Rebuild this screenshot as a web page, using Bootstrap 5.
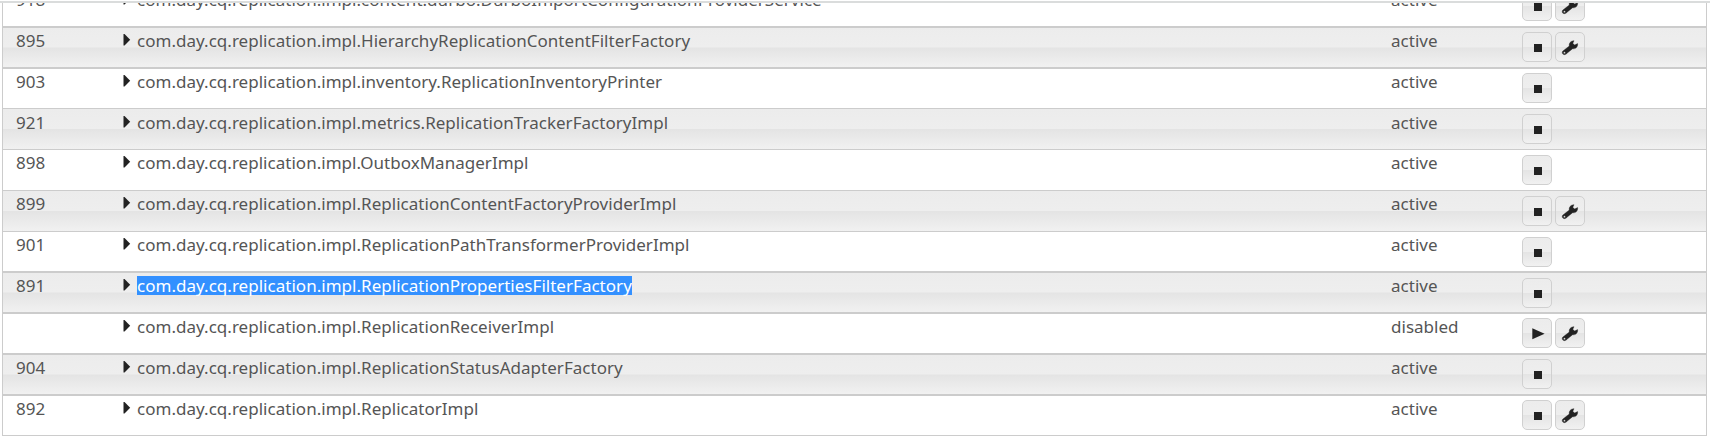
<!DOCTYPE html>
<html lang="en"><head><meta charset="utf-8"><title>Components</title>
<link href="https://cdn.jsdelivr.net/npm/bootstrap@5.3.0/dist/css/bootstrap.min.css" rel="stylesheet">
<style>
body{background:#fff;color:#555;font:17px/20px "Noto Sans",sans-serif;letter-spacing:.025px;overflow:hidden;height:436px}
.topline{height:2px;background:#dadcdc;margin-top:1px}
.comps{margin:0 3px 0 2px;height:433px;border:1px solid #ccc;border-top:0}
.comp{height:41px;border-top:2px solid #ccc;padding-left:13px}
.comp.thin{border-top-width:1px}
.comp.thin>.acts{padding-top:5px}
.comp.thin.low>*:not(.acts){margin-top:1px}
.comp.short{height:40px}
.comp.drop>.acts{padding-top:5px}
.comp.odd,.act{background:linear-gradient(#ececec 0,#eee 49%,#e4e4e4 51%,#f1f1f1)}
.comp.first{height:23px;border:0}
.comp.first>*{margin-top:-16px}
.cid{width:107px;padding-top:3px}
.tog{width:14px;padding-top:6px}
.cname{width:1254px;padding-top:3px}
.stat{width:131px;padding-top:3px}
.hl{display:inline-block;line-height:19px;height:19px;background:#3390ff;color:#fff;vertical-align:top}
.acts{gap:3px;padding-top:4px}
.act{width:30px;height:30px;border:1px solid #d0d0d0;border-radius:5px}
svg{display:block}
</style></head><body>
<div class="topline"></div>
<div class="comps overflow-hidden" id="rows"></div>
<script src="https://cdn.jsdelivr.net/npm/bootstrap@5.3.0/dist/js/bootstrap.bundle.min.js"></script>
<script>
const P='com.day.cq.replication.impl.';
const data=[
['918','content.durbo.DurboImportConfigurationProviderService','sw','first'],
['895','HierarchyReplicationContentFilterFactory','sw',''],
['903','inventory.ReplicationInventoryPrinter','s',''],
['921','metrics.ReplicationTrackerFactoryImpl','s','thin low'],
['898','OutboxManagerImpl','s','thin'],
['899','ReplicationContentFactoryProviderImpl','sw','thin'],
['901','ReplicationPathTransformerProviderImpl','s','thin short'],
['891','ReplicationPropertiesFilterFactory','s','drop'],
['','ReplicationReceiverImpl','pw',''],
['904','ReplicationStatusAdapterFactory','s',''],
['892','ReplicatorImpl','sw','']];
const ic={
s:'<rect x="12" y="12" width="8" height="8"/>',
p:'<path d="M10.300 10.200V21.300L22.600 15.800z"/>',
w:'<path fill-rule="evenodd" d="M7.600 19.300L14.300 14C13.800 11.400 15.500 8.800 19 8.700L17.800 11.300L19.600 13.100L22.600 11.600C23 15.200 20.600 17.200 17.600 16.700L12.300 21C9.800 24.200 6 22.200 7.600 19.300zM9.400 19.700a1 1 0 1 0 .1 2a1 1 0 0 0-.1-2z" stroke="#222" stroke-width=".4"/>'};
document.getElementById('rows').innerHTML=data.map((r,i)=>`<div class="comp d-flex align-items-start ${i%2?'odd':''} ${r[3]}"><div class="cid">${r[0]}</div><div class="tog"><svg width="8" height="12" fill="#222"><path d="M.5 0H1.500L7.200 5.700L1.500 11.500H.5z"/></svg></div><div class="cname"><span class="${i==7?'hl':''}">${P+r[1]}</span></div><div class="stat">${r[2][0]=='p'?'disabled':'active'}</div><div class="acts d-flex">${[...r[2]].map(k=>`<div class="act"><svg width="28" height="28" viewBox="1 1 28 28" fill="#222">${ic[k]}</svg></div>`).join('')}</div></div>`).join('');
</script></body></html>
